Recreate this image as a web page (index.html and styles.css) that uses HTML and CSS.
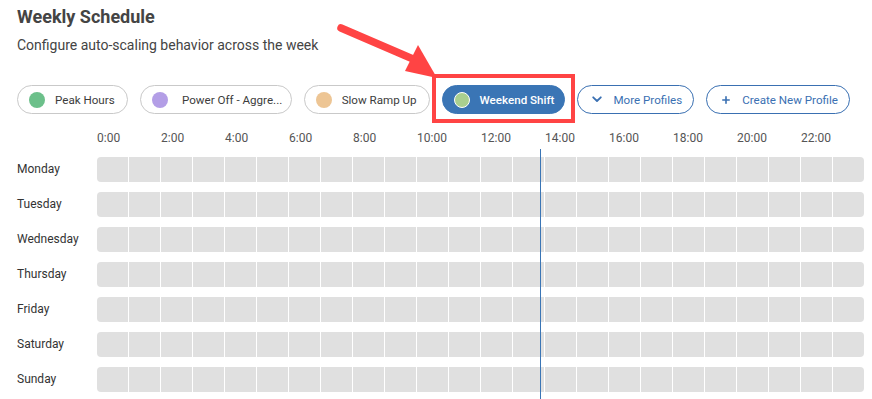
FILE: index.html
```html
<!DOCTYPE html>
<html lang="en">
<head>
<meta charset="utf-8">
<title>Weekly Schedule</title>
<link rel="stylesheet" href="styles.css">
</head>
<body>
<div class="page">
  <h1 class="title">Weekly Schedule</h1>
  <p class="subtitle">Configure auto-scaling behavior across the week</p>

  <div class="chips">
    <button class="chip"><span class="dot dot-green"></span><span class="chip-label">Peak Hours</span></button>
    <button class="chip chip-truncate" title="Power Off - Aggressive Scaling"><span class="dot dot-purple"></span><span class="chip-label">Power Off - Aggre...</span></button>
    <button class="chip"><span class="dot dot-tan"></span><span class="chip-label">Slow Ramp Up</span></button>
    <button class="chip chip-active chip-highlight"><span class="dot dot-lime"></span><span class="chip-label">Weekend Shift</span></button>
    <button class="chip chip-outline"><span class="chip-icon"><svg width="10" height="7" viewBox="0 0 10 7"><path d="M1.2 1.3 L5 5 L8.8 1.3" fill="none" stroke="#3a70b2" stroke-width="1.8" stroke-linecap="round" stroke-linejoin="round"/></svg></span><span class="chip-label">More Profiles</span></button>
    <button class="chip chip-outline"><span class="chip-icon"><svg width="10" height="10" viewBox="0 0 10 10"><path d="M5 1.8 V8.2 M1.8 5 H8.2" fill="none" stroke="#3a70b2" stroke-width="1.6" stroke-linecap="round"/></svg></span><span class="chip-label">Create New Profile</span></button>
  </div>

  <div class="schedule">
    <div class="hours">
      <span class="hour">0:00</span><span class="hour">2:00</span><span class="hour">4:00</span><span class="hour">6:00</span>
      <span class="hour">8:00</span><span class="hour">10:00</span><span class="hour">12:00</span><span class="hour">14:00</span>
      <span class="hour">16:00</span><span class="hour">18:00</span><span class="hour">20:00</span><span class="hour">22:00</span>
    </div>
    <div class="rows" id="rows"></div>
    <div class="now-line" style="left: 523px"></div>
  </div>
</div>

<svg class="arrow" width="872" height="399" viewBox="0 0 872 399" aria-hidden="true">
  <line x1="341" y1="28" x2="413" y2="59" stroke="#ff4444" stroke-width="7.5" stroke-linecap="round"/>
  <polygon points="418,45 405,71 437,78" fill="#ff4444"/>
</svg>

<script>
  var days = ["Monday","Tuesday","Wednesday","Thursday","Friday","Saturday","Sunday"];
  var rows = document.getElementById("rows");
  days.forEach(function (d) {
    var row = document.createElement("div");
    row.className = "row";
    var label = document.createElement("div");
    label.className = "day";
    label.textContent = d;
    row.appendChild(label);
    var cells = document.createElement("div");
    cells.className = "cells";
    for (var i = 0; i < 24; i++) {
      var c = document.createElement("div");
      c.className = "cell";
      cells.appendChild(c);
    }
    row.appendChild(cells);
    rows.appendChild(row);
  });
</script>
</body>
</html>
```

FILE: styles.css
```css
* { box-sizing: border-box; }

html, body {
  margin: 0;
  padding: 0;
  background: #ffffff;
  font-family: Roboto, "Liberation Sans", Arial, sans-serif;
  color: #333333;
  overflow: hidden;
}

body { position: relative; width: 872px; height: 399px; }

.page {
  padding: 6px 8px 0 17px;
}

.title {
  margin: 0;
  font-size: 18px;
  line-height: 22px;
  font-weight: 700;
  color: #444444;
}

.subtitle {
  margin: 7px 0 0;
  font-size: 14px;
  line-height: 20px;
  color: #444444;
}

.chips {
  display: flex;
  gap: 12px;
  margin-top: 30px;
  align-items: center;
}

.chip {
  position: relative;
  display: flex;
  align-items: center;
  height: 29px;
  padding: 0 12px 0 11px;
  border: 1px solid #c9c9c9;
  border-radius: 15px;
  background: #ffffff;
  font-family: inherit;
  font-size: 11.6px;
  font-weight: 400;
  color: #3c3c3c;
  white-space: nowrap;
  cursor: pointer;
}

.dot {
  width: 16px;
  height: 16px;
  border-radius: 50%;
  margin-right: 10px;
  flex: none;
}

.dot-green { background: #6cc08a; }
.dot-purple { background: #b39ee6; }
.dot-tan { background: #edc594; }
.dot-lime { background: #a9cf8f; border: 1px solid #ffffff; }

.chip-truncate { padding-right: 4px; }
.chip-truncate .chip-label { width: 109px; }

.chip-active {
  background: #3a75b5;
  border-color: #3a75b5;
  color: #ffffff;
  font-weight: 500;
  padding-right: 10px;
}

.chip-highlight::after {
  content: "";
  position: absolute;
  top: -12px;
  bottom: -10px;
  left: -11px;
  right: -11px;
  border: 4px solid #ff4444;
  pointer-events: none;
}

.chip-outline {
  border-color: #3a70b2;
  color: #3a70b2;
  padding: 0 11px 0 14px;
}

.chip-icon {
  width: 10px;
  display: flex;
  align-items: center;
  justify-content: center;
  margin-right: 11px;
}

.schedule {
  position: relative;
  margin-top: 16px;
}

.hours {
  display: grid;
  grid-template-columns: repeat(12, 64px);
  margin-left: 80px;
  height: 16px;
  font-size: 12px;
  line-height: 16px;
  color: #555555;
}

.rows {
  display: flex;
  flex-direction: column;
  gap: 10px;
  margin-top: 11px;
}

.row {
  display: flex;
  align-items: center;
  height: 25px;
}

.day {
  width: 80px;
  flex: none;
  font-size: 12px;
  color: #333333;
  margin-top: -2px;
}

.cells {
  display: grid;
  grid-template-columns: repeat(24, 31px);
  column-gap: 1px;
  height: 25px;
  border-radius: 4px;
  overflow: hidden;
}

.cell { background: #e0e0e0; }

.now-line {
  position: absolute;
  top: 19px;
  bottom: -12px;
  width: 1px;
  background: #3a75b5;
}

.arrow {
  position: absolute;
  left: 0;
  top: 0;
  pointer-events: none;
}
```
